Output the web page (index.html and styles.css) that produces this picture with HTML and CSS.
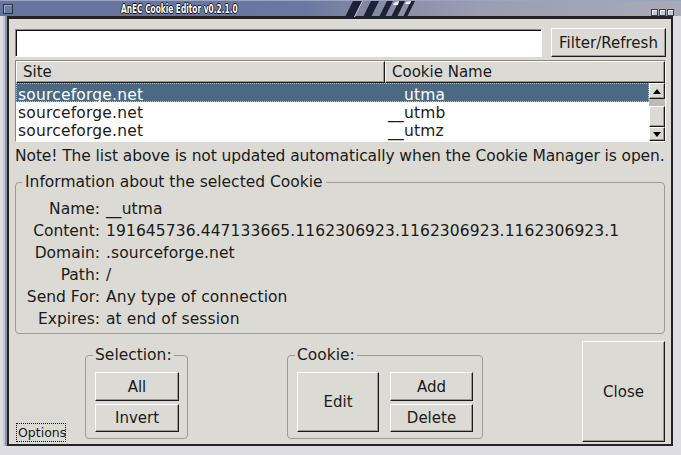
FILE: index.html
```html
<!DOCTYPE html>
<html>
<head>
<meta charset="utf-8">
<link rel="stylesheet" href="styles.css">
</head>
<body>
<div class="titlebar">
  <span class="tb-icon"></span>
  <span class="title">AnEC Cookie Editor v0.2.1.0</span>
  <svg class="stripes" width="84" height="16" viewBox="0 0 84 16">
    <polygon points="0,16 8,0 18,0 10,16" fill="#1c2236"/>
    <polygon points="18,16 26,0 34,0 26,16" fill="#1c2236"/>
    <polygon points="34,16 42,0 48,0 40,16" fill="#1c2236"/>
    <polygon points="46,16 54,0 60,0 52,16" fill="#1c2236"/>
    <polygon points="58,16 66,0 70,0 62,16" fill="#1c2236"/>
    <polygon points="9,16 17,0 18,0 10,16" fill="#e8e8f0"/>
    <polygon points="48,4 49,2 54,0 53,4" fill="#f4f4f8"/>
    <polygon points="60,3 61,1 66,0 65,3" fill="#f4f4f8"/>
  </svg>
  <span class="tb-buttons"><i></i><i></i><i></i></span>
</div>
<div class="window">
  <div class="toprow">
    <div class="entry"></div>
    <div class="btn filter">Filter/Refresh</div>
  </div>
  <div class="list">
    <div class="list-head">
      <div class="hcol hsite">Site</div>
      <div class="hcol hname">Cookie Name</div>
    </div>
    <div class="list-body">
      <div class="rows">
        <div class="row sel"><span class="c1">sourceforge.net</span><span class="c2">__utma</span></div>
        <div class="row"><span class="c1">sourceforge.net</span><span class="c2">__utmb</span></div>
        <div class="row"><span class="c1">sourceforge.net</span><span class="c2">__utmz</span></div>
      </div>
      <div class="scrollbar">
        <div class="sb-btn"><span class="arr up"></span></div>
        <div class="sb-trough"></div>
        <div class="sb-thumb"></div>
        <div class="sb-btn down"><span class="arr dn"></span></div>
      </div>
    </div>
  </div>
  <div class="note">Note! The list above is not updated automatically when the Cookie Manager is open.</div>
  <fieldset class="frame info">
    <legend>Information about the selected Cookie</legend>
    <div class="grid">
      <div class="lbl">Name:</div><div class="val">__utma</div>
      <div class="lbl">Content:</div><div class="val">191645736.447133665.1162306923.1162306923.1162306923.1</div>
      <div class="lbl">Domain:</div><div class="val">.sourceforge.net</div>
      <div class="lbl">Path:</div><div class="val">/</div>
      <div class="lbl">Send For:</div><div class="val">Any type of connection</div>
      <div class="lbl">Expires:</div><div class="val">at end of session</div>
    </div>
  </fieldset>
  <div class="bottom">
    <div class="options">Options</div>
    <fieldset class="frame selection">
      <legend>Selection:</legend>
      <div class="stack">
        <div class="btn b-all">All</div>
        <div class="btn b-inv">Invert</div>
      </div>
    </fieldset>
    <fieldset class="frame cookie">
      <legend>Cookie:</legend>
      <div class="cookie-row">
        <div class="btn b-edit">Edit</div>
        <div class="stack stack-wide">
          <div class="btn b-add">Add</div>
          <div class="btn b-del">Delete</div>
        </div>
      </div>
    </fieldset>
    <div class="btn b-close">Close</div>
  </div>
</div>
</body>
</html>
```
FILE: styles.css
```css
* { box-sizing: border-box; }
html, body { margin: 0; padding: 0; }
body {
  width: 681px;
  height: 455px;
  overflow: hidden;
  background: #dcdce2;
  font-family: "DejaVu Sans", sans-serif;
  font-size: 15.5px;
  color: #1a1a1a;
}

/* ---------- title bar ---------- */
.titlebar {
  height: 16px;
  display: flex;
  align-items: center;
  background: linear-gradient(to right, #66749e 0%, #6a78a1 45%, #7e86a4 52%, #9a9eb0 70%, #a8aab6 100%);
  border-top: 1px solid #9ba4c2;
}
.tb-icon {
  width: 10px;
  height: 10px;
  margin-left: 3px;
  border: 1px solid #2a3048;
  background: #6e7ca4;
  box-shadow: inset 1px 1px 0 #a4aecc;
}
.title {
  display: inline-block;
  margin-left: 108px;
  font-family: "DejaVu Sans Condensed", "DejaVu Sans", sans-serif;
  font-weight: bold;
  font-size: 12.5px;
  line-height: 14px;
  color: #ffffff;
  text-shadow: 1px 0 0 #111, -1px 0 0 #111, 0 1px 0 #111, 0 -1px 0 #111;
  transform: scaleX(0.66);
  transform-origin: left center;
  white-space: nowrap;
  width: 115px;
}
.stripes { margin-left: 109px; display: block; }
.tb-buttons {
  margin-left: auto;
  margin-right: 7px;
  display: flex;
  gap: 1px;
  align-self: flex-end;
}
.tb-buttons i {
  width: 7px;
  height: 7px;
  border: 1px solid #3a3e50;
  background: #c4c6d0;
  box-shadow: inset 1px 1px 0 #f0f0f4;
}

/* ---------- window ---------- */
.window {
  margin-left: 7px;
  width: 666px;
  height: 430px;
  background: #dcdad5;
  border: 2px solid #232323;
  border-top-width: 3px;
  padding: 0 5px 0 6px;
  display: flex;
  flex-direction: column;
  box-shadow: -2px 0 0 #8e92a4, -4px 0 0 #c4c6d0;
}

.btn {
  background: #dcdad5;
  border: 1px solid;
  border-color: #ffffff #1a1a1a #1a1a1a #ffffff;
  box-shadow: inset -1px -1px 0 #9d9a93;
  display: flex;
  align-items: center;
  justify-content: center;
  white-space: nowrap;
  color: #1a1a1a;
  font-size: 15px;
}

.toprow {
  margin-top: 9px;
  height: 29px;
  display: flex;
  align-items: center;
}
.entry {
  width: 527px;
  height: 28px;
  background: #ffffff;
  border: 1px solid;
  border-color: #8a8782 #ffffff #ffffff #8a8782;
  box-shadow: inset 1px 1px 0 #111;
}
.filter {
  margin-left: auto;
  width: 115px;
  height: 29px;
}

/* ---------- list ---------- */
.list {
  margin-top: 3px;
  height: 82px;
  border: 1px solid;
  border-color: #8a8782 #ffffff #ffffff #8a8782;
  background: #ffffff;
  display: flex;
  flex-direction: column;
}
.list-head {
  height: 22px;
  display: flex;
  flex: none;
}
.hcol {
  height: 22px;
  background: #dcdad5;
  border: 1px solid;
  border-color: #ffffff #1a1a1a #1a1a1a #ffffff;
  box-shadow: inset -1px -1px 0 #9d9a93;
  padding-left: 6px;
  line-height: 21px;
  font-size: 15px;
}
.hsite { width: 369px; }
.hname { flex: 1; }
.list-body {
  flex: 1;
  display: flex;
}
.rows { flex: 1; }
.row {
  height: 18px;
  line-height: 18px;
  padding-top: 2px;
  display: flex;
  white-space: nowrap;
  letter-spacing: 0.2px;
}
.row .c1 { width: 369px; padding-left: 2px; }
.row .c2 { padding-left: 3px; }
.row.sel {
  background: #4b6983;
  color: #ffffff;
  height: 19px;
  border: 1px dotted #e6c65a;
  line-height: 18px;
  padding-top: 2px;
}
.row.sel .c1 { width: 368px; padding-left: 1px; }

.scrollbar {
  width: 16px;
  display: flex;
  flex-direction: column;
  background: #bdbab4;
}
.sb-btn {
  height: 16px;
  background: #dcdad5;
  border: 1px solid;
  border-color: #ffffff #1a1a1a #1a1a1a #ffffff;
  box-shadow: inset -1px -1px 0 #9d9a93;
  display: flex;
  align-items: center;
  justify-content: center;
}
.sb-btn.down { height: 14px; margin-top: auto; }
.sb-trough { height: 7px; }
.sb-thumb {
  height: 21px;
  background: #dcdad5;
  border: 1px solid;
  border-color: #ffffff #1a1a1a #1a1a1a #ffffff;
  box-shadow: inset -1px -1px 0 #9d9a93;
}
.arr {
  width: 0;
  height: 0;
  border-left: 4px solid transparent;
  border-right: 4px solid transparent;
}
.arr.up { border-bottom: 5px solid #000; }
.arr.dn { border-top: 5px solid #000; }

/* ---------- note ---------- */
.note {
  margin-top: 5px;
  height: 18px;
  line-height: 18px;
  white-space: nowrap;
  letter-spacing: -0.1px;
}

/* ---------- frames ---------- */
.frame {
  margin: 0;
  border: 1px solid #9d9a94;
  border-radius: 4px;
  padding: 0;
  min-width: 0;
}
.frame legend {
  margin-left: 7px;
  padding: 0 2px;
  line-height: 18px;
  white-space: nowrap;
}
.info {
  margin-top: 8px;
  width: 650px;
  height: 161px;
}
.info legend { padding: 0 3px; margin-left: 6px; }
.grid {
  margin-top: 7px;
  display: grid;
  grid-template-columns: 84px 1fr;
  column-gap: 6px;
  grid-auto-rows: 22px;
  line-height: 22px;
  white-space: nowrap;
}
.lbl { text-align: right; }
.val { letter-spacing: 0.1px; }

/* ---------- bottom ---------- */
.bottom {
  margin-top: 7px;
  height: 101px;
  display: flex;
  align-items: flex-end;
}
.options {
  margin-left: 1px;
  width: 50px;
  height: 19px;
  border: 1px dotted #111;
  font-size: 12.5px;
  line-height: 17px;
  padding-left: 1px;
  white-space: nowrap;
}
.selection {
  margin-left: 19px;
  width: 103px;
  height: 93px;
  margin-bottom: 3px;
  padding: 8px 0 0 9px;
}
.cookie {
  margin-left: 99px;
  width: 196px;
  height: 93px;
  margin-bottom: 3px;
  padding: 8px 0 0 9px;
}
.selection legend, .cookie legend { margin-left: -2px; padding: 0 2px; }
.stack {
  display: flex;
  flex-direction: column;
  gap: 3px;
  width: 84px;
}
.b-all { height: 29px; }
.b-inv { height: 28px; }
.cookie-row { display: flex; }
.b-edit { width: 82px; height: 60px; }
.stack-wide { margin-left: 11px; width: 83px; }
.b-add { height: 29px; }
.b-del { height: 28px; }
.b-close {
  margin-left: auto;
  margin-right: 1px;
  width: 83px;
  height: 101px;
}
```
